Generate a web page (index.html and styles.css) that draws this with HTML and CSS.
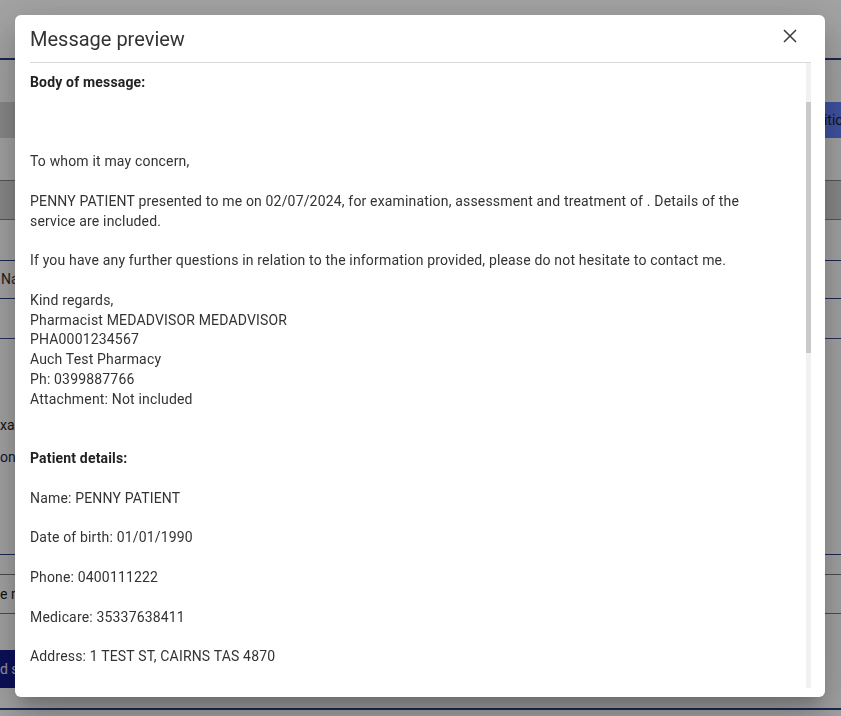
FILE: index.html
```html
<!DOCTYPE html>
<html lang="en">
<head>
<meta charset="utf-8">
<title>Message preview</title>
<link rel="stylesheet" href="styles.css">
</head>
<body>
<div class="page">
  <div class="topbar"></div>
  <div class="row-btn">
    <div class="band-left"></div>
    <div class="btn-blue">Position</div>
  </div>
  <div class="row-band"></div>
  <div class="row-field">Na</div>
  <div class="row-line"></div>
  <div class="txt txt-exam">xa</div>
  <div class="txt txt-on">on</div>
  <div class="row-line2"></div>
  <div class="row-field2">e m</div>
  <div class="row-navy">d s</div>
  <div class="row-last"></div>
</div>

<div class="backdrop"></div>

<div class="modal" role="dialog" aria-label="Message preview">
  <div class="modal-head">
    <h2 class="modal-title">Message preview</h2>
    <svg class="close" width="14" height="14" viewBox="0 0 14 14" aria-label="Close"><path d="M1 1 L13 13 M13 1 L1 13" stroke="#3a3a3a" stroke-width="1.5" fill="none"/></svg>
  </div>
  <div class="modal-body">
    <div class="msg"><strong>Body of message:</strong>



To whom it may concern,

PENNY PATIENT presented to me on 02/07/2024, for examination, assessment and treatment of . Details of the service are included.

If you have any further questions in relation to the information provided, please do not hesitate to contact me.

Kind regards,
Pharmacist MEDADVISOR MEDADVISOR
PHA0001234567
Auch Test Pharmacy
Ph: 0399887766
Attachment: Not included


<strong>Patient details:</strong>

Name: PENNY PATIENT

Date of birth: 01/01/1990

Phone: 0400111222

Medicare: 35337638411

Address: 1 TEST ST, CAIRNS TAS 4870</div>
    <div class="scrollbar"><div class="thumb"></div></div>
  </div>
</div>
</body>
</html>
```

FILE: styles.css
```css
* { box-sizing: border-box; }
html, body { margin: 0; padding: 0; }
body {
  width: 841px;
  height: 716px;
  overflow: hidden;
  background: #ffffff;
  font-family: Roboto, "Liberation Sans", Arial, sans-serif;
}

/* background page */
.page { display: flex; flex-direction: column; width: 100%; }
.topbar { height: 60px; border-bottom: 2px solid #2b3f86; }
.row-btn { display: flex; height: 36px; margin-top: 42px; }
.band-left { flex: 1; background: #d6d6d6; }
.btn-blue {
  width: 41px; background: #6580fd; color: #1b1b1b;
  font-size: 14px; line-height: 36px; white-space: nowrap; overflow: hidden;
}
.row-band { height: 40px; margin-top: 42px; background: #d6d6d6; border-top: 1px solid #8a8a8a; border-bottom: 1px solid #8a8a8a; }
.row-field {
  height: 39px; margin-top: 40px; border-top: 1px solid #2b3f86; border-bottom: 1px solid #2b3f86;
  font-size: 14px; line-height: 37px; color: #333; padding-left: 1px;
}
.row-line { height: 1px; margin-top: 39px; background: #3c4f8a; }
.txt { font-size: 14px; line-height: 20px; color: #222; }
.txt-exam { margin-top: 76px; }
.txt-on { margin-top: 12px; color: #1a2456; }
.row-line2 { height: 1px; margin-top: 87px; background: #2b3f86; }
.row-field2 {
  height: 40px; margin-top: 19px; border-top: 1px solid #777; border-bottom: 1px solid #777;
  font-size: 14px; line-height: 38px; color: #222;
}
.row-navy {
  height: 38px; margin-top: 36px; width: 200px; background: #141a8c; color: #e8e8ff;
  font-size: 14px; line-height: 38px; padding-left: 0;
}
.row-last { height: 2px; margin-top: 20px; background: #2b3f86; }

/* overlay */
.backdrop { position: fixed; inset: 0; background: rgba(0, 0, 0, 0.36); }

/* modal */
.modal {
  position: fixed;
  left: 15px; top: 15px;
  width: 810px; height: 682px;
  background: #fff;
  border-radius: 6px;
  padding: 0 14px 9px 15px;
  display: flex; flex-direction: column;
  box-shadow: 0 11px 15px -7px rgba(0,0,0,.2), 0 24px 38px 3px rgba(0,0,0,.14), 0 9px 46px 8px rgba(0,0,0,.12);
}
.modal-head {
  height: 48px;
  display: flex; align-items: center; justify-content: space-between;
  border-bottom: 1px solid #d8d8d8;
  flex: none;
}
.modal-title {
  margin: 0; padding-top: 1px;
  font-size: 20px; font-weight: 400; color: #333;
  line-height: 23px;
}
.close { margin-right: 14px; margin-bottom: 5px; flex: none; }

.modal-body { flex: 1; display: flex; min-height: 0; overflow: hidden; }
.msg {
  flex: 1;
  padding: 10px 30px 0 0;
  white-space: pre-line;
  font-size: 14px; line-height: 19.8px; color: #333;
  letter-spacing: 0.17px;
}
.msg strong { font-weight: 700; color: #222; }
.scrollbar { width: 5px; flex: none; background: #f1f1f1; }
.thumb { margin-top: 39px; height: 251px; background: #cacaca; }
```
